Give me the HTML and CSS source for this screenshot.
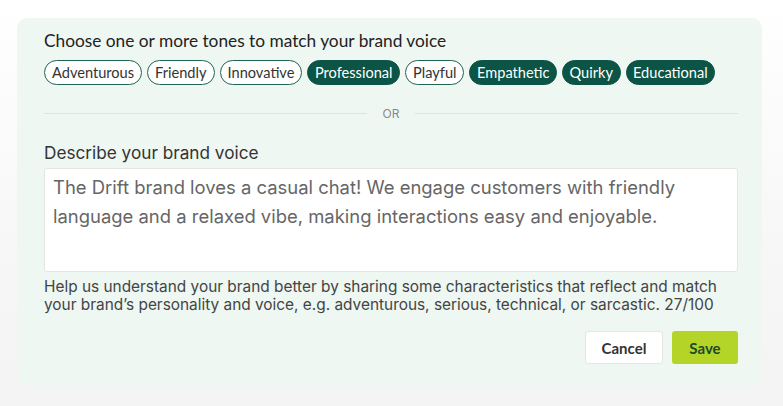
FILE: index.html
```html
<!DOCTYPE html>
<html>
<head>
<meta charset="utf-8">
<link rel="stylesheet" href="styles.css">
</head>
<body>
<div class="page">
  <div class="panel">
    <div class="title">Choose one or more tones to match your brand voice</div>
    <div class="chips">
      <span class="chip">Adventurous</span>
      <span class="chip">Friendly</span>
      <span class="chip">Innovative</span>
      <span class="chip on">Professional</span>
      <span class="chip">Playful</span>
      <span class="chip on">Empathetic</span>
      <span class="chip on">Quirky</span>
      <span class="chip on">Educational</span>
    </div>
    <div class="divider"><span class="line"></span><span class="or">OR</span><span class="line"></span></div>
    <div class="label">Describe your brand voice</div>
    <div class="textarea">The Drift brand loves a casual chat! We engage customers with friendly language and a relaxed vibe, making interactions easy and enjoyable.</div>
    <div class="help">Help us understand your brand better by sharing some characteristics that reflect and match your brand’s personality and voice, e.g. adventurous, serious, technical, or sarcastic. 27/100</div>
    <div class="actions">
      <button class="btn cancel">Cancel</button>
      <button class="btn save">Save</button>
    </div>
  </div>
</div>
</body>
</html>
```
FILE: styles.css
```css
html, body {
  margin: 0;
  padding: 0;
}
body {
  width: 783px;
  height: 406px;
  overflow: hidden;
  background: linear-gradient(180deg, #ffffff 0%, #f7f7f7 60%, #f4f4f4 100%);
  font-family: Lato, "Liberation Sans", sans-serif;
}
.page {
  padding: 18px 0 0 17px;
}
.panel {
  width: 745px;
  height: 367px;
  box-sizing: border-box;
  background: #eef7f2;
  border-radius: 10px;
  padding: 12px 24px 0 27px;
}
.title {
  font-size: 17.3px;
  line-height: 22px;
  color: #222;
}
.chips {
  display: flex;
  gap: 5px;
  margin-top: 8px;
}
.chip {
  height: 25px;
  box-sizing: border-box;
  border: 1px solid #1f6353;
  border-radius: 13px;
  background: #fff;
  color: #333;
  font-size: 14.6px;
  line-height: 23px;
  padding: 0 7px;
}
.chip.on {
  background: #0b5446;
  border-color: #0b5446;
  color: #fff;
  padding: 0 6.5px;
}
.divider {
  display: flex;
  align-items: center;
  margin-top: 21px;
  height: 14px;
  gap: 16px;
}
.line {
  flex: 1;
  height: 1px;
  background: #dde3df;
}
.or {
  font-family: Inter, sans-serif;
  font-size: 12px;
  color: #888;
}
.label {
  margin-top: 22px;
  font-family: Inter, sans-serif;
  font-size: 17.2px;
  line-height: 22px;
  color: #333;
}
.textarea {
  margin-top: 4px;
  height: 104px;
  box-sizing: border-box;
  background: #fff;
  border: 1px solid #e3e6e4;
  border-radius: 3px;
  padding: 4px 8px;
  font-family: Inter, sans-serif;
  font-size: 18.45px;
  line-height: 29px;
  color: #666;
}
.help {
  margin-top: 6px;
  font-family: Inter, sans-serif;
  font-size: 15.4px;
  line-height: 18px;
  color: #444;
}
.actions {
  display: flex;
  justify-content: flex-end;
  gap: 9px;
  margin-top: 17px;
}
.btn {
  height: 33px;
  box-sizing: border-box;
  border-radius: 3px;
  font-family: Lato, sans-serif;
  font-size: 15px;
  font-weight: 700;
  cursor: pointer;
}
.cancel {
  width: 78px;
  background: #fff;
  border: 1px solid #e3e6e4;
  color: #333;
}
.save {
  width: 66px;
  background: #b4d528;
  border: none;
  color: #1c4a2c;
}
```
